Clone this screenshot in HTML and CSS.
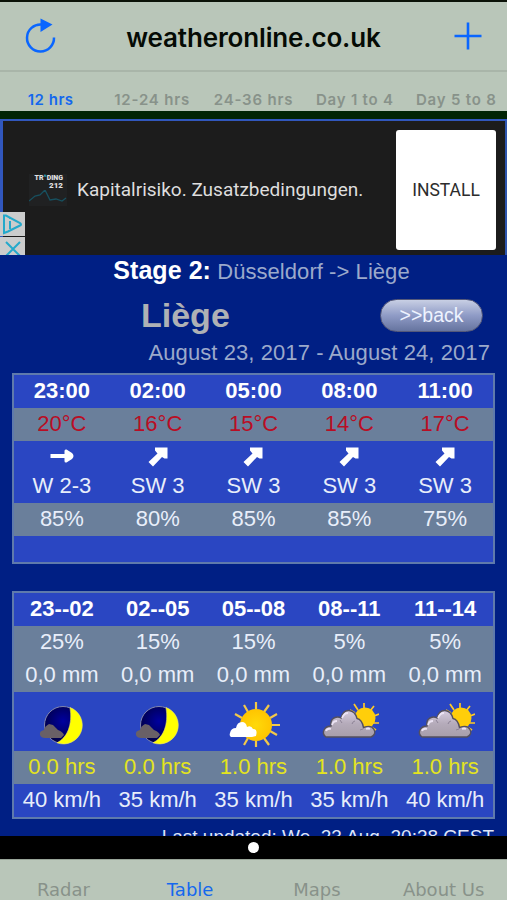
FILE: index.html
```html
<!DOCTYPE html>
<html lang="en">
<head>
    <meta charset="UTF-8">
    <meta name="viewport" content="width=device-width, initial-scale=1.0">
    <title>weatheronline.co.uk</title>
    <link rel="stylesheet" href="styles.css">
</head>
<body>
    <svg class="sprite" aria-hidden="true">
        <defs>
            <radialGradient id="night" cx="50%" cy="40%" r="60%">
                <stop offset="0" stop-color="#0000a0"/>
                <stop offset="1" stop-color="#000040"/>
            </radialGradient>
            <linearGradient id="cloudFill" x1="0" y1="0" x2="0" y2="1">
                <stop offset="0" stop-color="#d6cce0"/>
                <stop offset="0.5" stop-color="#b5abba"/>
                <stop offset="1" stop-color="#a79eaa"/>
            </linearGradient>
            <radialGradient id="sunFill" cx="50%" cy="50%" r="50%">
                <stop offset="0" stop-color="#ffd90a"/>
                <stop offset="1" stop-color="#ffc400"/>
            </radialGradient>
        </defs>
        <symbol id="arrow-e" viewBox="0 0 24 22">
            <path d="M.5 9h14V6q0-2 2-1.500l5.500 3.500q3 3 0 6l-5.500 3.500q-2 .5-2-1.500v-3H.5z"/>
        </symbol>
        <symbol id="arrow-ne" viewBox="0 0 24 22">
            <path d="M2.500 17l9-8.500-2.500-3V2.500h12.500v11h-3l-2.500-1.500-9 9.500z"/>
        </symbol>
        <symbol id="moon" viewBox="0 0 60 48">
            <circle cx="31" cy="25" r="18.500" fill="url(#night)" stroke="#8286ae" stroke-width="1"/>
            <path d="M38 7.500a18.800 18.800 0 0 1-13 35.300C35 38 41 25 38 7.500z" fill="#ffff00" stroke="#e8e070" stroke-width=".6"/>
            <path d="M8 35q-1-4 4-5 1-4 5-6l4 1 5 5q5 2 6 5l-3 3H13q-4 0-5-3z" fill="#696066"/>
        </symbol>
        <symbol id="sunny" viewBox="0 0 60 48">
            <g stroke="#f2c84a" stroke-width="2.200">
                <path d="M33 10V2M41 12l5-7M47 18l7-4M49 25h8M47 31l7 4M41 38l5 7M33 40v7M25 38l-4 7M19 18l-7-4M25 12l-4-7"/>
            </g>
            <circle cx="33" cy="25" r="16" fill="url(#sunFill)"/>
            <path d="M7 33q1-5 6-5 1-6 6-6 4 0 5 5 4-2 6 2 5 0 3 7l-4 1H8q-2-1-1-4z" fill="#fff"/>
        </symbol>
        <symbol id="cloudy" viewBox="0 0 60 48">
            <g stroke="#ffc928" stroke-width="1.700">
                <path d="M45 9V3M51 11l4-5M55 16l5-2M54 23h6M52 27l5 3M39 10l-4-6M36 13l-5-3"/>
            </g>
            <circle cx="46" cy="18" r="10.500" fill="#ffce0a"/>
            <path d="M7 37q-4-3-2-7t7-4q-1-6 3-8t7 0q2-8 8-7.500t8 8q5 1 6.500 9 8-3 10.500 2t-3 7.500z" fill="url(#cloudFill)" stroke="#54505e" stroke-width="1.400"/>
            <path d="M13 25q1-4 5-4M23 18q2-5 6-5M7 31q1-3 5-2M47 29q2-1 4 0" fill="none" stroke="#ece4f5" stroke-width="1.800"/>
            <path d="M36 21q-2 0-3 3M21 20l2 3M44 29l-3 1" fill="none" stroke="#8d8396" stroke-width="1"/>
        </symbol>
    </svg>

    <header class="navbar">
        <svg class="refresh" width="31" height="36" viewBox="0 0 31 36">
            <path d="M29 19.500A13.500 13.500 0 1 1 16.500 6.500" fill="none" stroke="#0a66ff" stroke-width="2.500"/>
            <path d="M15.500 .5l12 6-12 7.500z" fill="#0a66ff"/>
        </svg>
        <h1>weatheronline.co.uk</h1>
        <svg class="plus" width="28" height="28" viewBox="0 0 28 28">
            <path d="M14 .5v27M.5 14h27" stroke="#0a66ff" stroke-width="2.600"/>
        </svg>
    </header>
    <nav class="tabs">
        <span class="active">12 hrs</span>
        <span>12-24 hrs</span>
        <span>24-36 hrs</span>
        <span>Day 1 to 4</span>
        <span>Day 5 to 8</span>
    </nav>

    <section class="ad">
        <div class="ad-logo">
            <span>TR<i>^</i>DING</span>
            <span class="num">212</span>
            <svg width="38" height="13" viewBox="0 0 38 13"><path d="M0 11l6-5 5-1 5-5 5 10 6-1 6 2 4-3" fill="none" stroke="#17505f" stroke-width="1.300"/></svg>
        </div>
        <p>Kapitalrisiko. Zusatzbedingungen.</p>
        <div class="install">INSTALL</div>
        <div class="ad-marks">
            <svg width="25" height="24" viewBox="0 0 25 24"><path d="M4 3.500v17.500l4-1.500 12-6q2-1 0-2.500L6 3.500zM10 9v8M10 5.500v1.500" fill="none" stroke="#24a9cb" stroke-width="2"/></svg>
            <svg width="25" height="18" viewBox="0 0 25 18"><path d="M6 5l14 14M20 5L6 19" fill="none" stroke="#24a9cb" stroke-width="2"/></svg>
        </div>
    </section>

    <main class="forecast">
        <div class="stage"><b>Stage 2:</b> <span>Düsseldorf -&gt; Liège</span></div>
        <div class="city">
            <h2>Liège</h2>
            <a class="back">&gt;&gt;back</a>
        </div>
        <div class="dates">August 23, 2017 - August 24, 2017</div>

        <div class="table hourly">
            <div class="row head"><span>23:00</span><span>02:00</span><span>05:00</span><span>08:00</span><span>11:00</span></div>
            <div class="row grey temp"><span>20°C</span><span>16°C</span><span>15°C</span><span>14°C</span><span>17°C</span></div>
            <div class="row wind">
                <span><svg><use href="#arrow-e"/></svg>W 2-3</span>
                <span><svg><use href="#arrow-ne"/></svg>SW 3</span>
                <span><svg><use href="#arrow-ne"/></svg>SW 3</span>
                <span><svg><use href="#arrow-ne"/></svg>SW 3</span>
                <span><svg><use href="#arrow-ne"/></svg>SW 3</span>
            </div>
            <div class="row grey"><span>85%</span><span>80%</span><span>85%</span><span>85%</span><span>75%</span></div>
            <div class="row empty"></div>
        </div>

        <div class="table">
            <div class="row head"><span>23--02</span><span>02--05</span><span>05--08</span><span>08--11</span><span>11--14</span></div>
            <div class="row grey"><span>25%</span><span>15%</span><span>15%</span><span>5%</span><span>5%</span></div>
            <div class="row grey"><span>0,0 mm</span><span>0,0 mm</span><span>0,0 mm</span><span>0,0 mm</span><span>0,0 mm</span></div>
            <div class="row sky">
                <svg><use href="#moon"/></svg>
                <svg><use href="#moon"/></svg>
                <svg><use href="#sunny"/></svg>
                <svg><use href="#cloudy"/></svg>
                <svg><use href="#cloudy"/></svg>
            </div>
            <div class="row grey sun"><span>0.0 hrs</span><span>0.0 hrs</span><span>1.0 hrs</span><span>1.0 hrs</span><span>1.0 hrs</span></div>
            <div class="row"><span>40 km/h</span><span>35 km/h</span><span>35 km/h</span><span>35 km/h</span><span>40 km/h</span></div>
        </div>
        <div class="updated">Last updated: We, 23 Aug, 20:38 CEST</div>
    </main>

    <div class="pager"><span></span></div>
    <footer class="tabbar">
        <span>Radar</span>
        <span class="active">Table</span>
        <span>Maps</span>
        <span>About Us</span>
    </footer>
</body>
</html>
```
FILE: styles.css
```css
* {
    box-sizing: border-box;
}

body {
    font-family: 'Liberation Sans', Arial, sans-serif;
    margin: 0;
    width: 507px;
    height: 900px;
    overflow: hidden;
    background-color: #001f84;
    color: #e8eefa;
    display: flex;
    flex-direction: column;
}

h1, h2, p {
    margin: 0;
}

.sprite {
    position: absolute;
    width: 0;
    height: 0;
}

/* top bar */
.navbar {
    height: 72px;
    flex: none;
    background-color: #b9c6b9;
    border-top: 2px solid #0b1208;
    border-bottom: 2px solid #a9b5a9;
    display: flex;
    align-items: center;
    justify-content: space-between;
    padding: 0 25px;
}

.navbar h1 {
    font-family: Inter, sans-serif;
    font-size: 26px;
    font-weight: 600;
    letter-spacing: -0.15px;
    color: #050b05;
    padding-top: 2px;
    margin-right: 3px;
}

.tabs {
    height: 39px;
    flex: none;
    background-color: #b9c6b9;
    display: grid;
    grid-template-columns: repeat(5, 1fr);
    text-align: center;
    font-family: Inter, sans-serif;
    font-size: 15px;
    font-weight: 600;
    line-height: 18px;
    letter-spacing: 0.8px;
    padding-top: 19px;
    color: #88928a;
    white-space: nowrap;
}

.tabs .active, .tabbar .active {
    color: #1468ee;
}

.tabs .active {
    letter-spacing: 0.5px;
}

/* banner */
.ad {
    position: relative;
    height: 144px;
    flex: none;
    background-color: #1c1c1c;
    border-top: 8px solid #022405;
    display: flex;
    align-items: center;
    padding-left: 29px;
    padding-top: 5px;
    font-family: Roboto, sans-serif;
    box-shadow: inset 3px 2px 0 #3157bd, inset -2px 0 0 #2d55ae;
}

.ad-logo {
    width: 38px;
    height: 32px;
    margin-right: 10px;
    font-size: 7px;
    font-weight: 900;
    line-height: 8px;
    display: flex;
    flex-direction: column;
    align-items: flex-end;
    background-color: #202122;
    color: #e0e0e0;
}

.ad-logo span {
    padding-right: 4px;
}

.ad-logo .num {
    font-size: 8px;
}

.ad-logo i {
    color: #28a5bd;
    font-style: normal;
}

.ad p {
    width: 319px;
    font-size: 19px;
    white-space: nowrap;
    color: #dedede;
}

.install {
    width: 100px;
    height: 120px;
    border-radius: 3px;
    background-color: #fff;
    color: #2c2c2c;
    font-size: 17.5px;
    line-height: 120px;
    text-align: center;
}

.ad-marks {
    position: absolute;
    left: 0;
    bottom: 0;
    display: flex;
    flex-direction: column;
    gap: 1px;
}

.ad-marks svg {
    display: block;
    background-color: #cbcccc;
}

/* forecast */
.forecast {
    height: 581px;
    flex: none;
    overflow: hidden;
    padding: 0 12px 0 12px;
}

.stage {
    height: 37px;
    line-height: 31px;
    text-align: center;
    font-size: 22px;
    letter-spacing: 0.06px;
    color: #9ba9cb;
    padding-left: 16px;
    white-space: nowrap;
}

.stage b {
    font-size: 25px;
    color: #fff;
}

.city {
    height: 46px;
    display: flex;
    align-items: center;
    justify-content: space-between;
    padding: 0 12px 0 129px;
}

.city h2 {
    font-size: 34px;
    color: #aeb1b5;
}

.back {
    width: 103px;
    height: 33px;
    border: 1.5px solid #55597a;
    border-radius: 17px;
    background: linear-gradient(#c8cfe4, #8f9bc6 50%, #66749f);
    font-size: 19.5px;
    line-height: 31px;
    text-align: center;
    color: #eef3ff;
}

.dates {
    height: 35px;
    line-height: 29px;
    text-align: right;
    padding-right: 5px;
    font-size: 22px;
    letter-spacing: 0.08px;
    color: #9ba9cb;
    white-space: nowrap;
}

.table {
    border: 2px solid #5f7aac;
    background-color: #2a46c2;
    font-size: 22px;
}

.hourly {
    margin-bottom: 27px;
}

.row {
    display: grid;
    grid-template-columns: repeat(5, 1fr);
    height: 33px;
    line-height: 32px;
    text-align: center;
    white-space: nowrap;
}

.head {
    font-weight: bold;
    color: #fff;
}

.grey {
    background-color: #6a7f9b;
}

.temp {
    color: #b90d24;
}

.sun {
    color: #e4e41e;
}

.wind {
    height: 62px;
}

.wind span {
    display: flex;
    flex-direction: column;
    align-items: center;
    line-height: 32px;
}

.wind svg {
    width: 24px;
    height: 22px;
    margin-top: 4px;
    margin-bottom: 3px;
    fill: #fff;
}

.empty {
    height: 26px;
}

.sky {
    height: 59px;
    align-items: center;
    justify-items: center;
}

.sky svg {
    width: 60px;
    height: 48px;
    margin-top: 5px;
}

.updated {
    text-align: right;
    padding-right: 1px;
    font-size: 19px;
    line-height: 36px;
    color: #dfe6f8;
    white-space: nowrap;
}

/* bottom */
.pager {
    height: 23px;
    flex: none;
    background-color: #000;
    display: flex;
    align-items: center;
    justify-content: center;
}

.pager span {
    width: 11px;
    height: 11px;
    border-radius: 50%;
    background-color: #fff;
}

.tabbar {
    flex: 1;
    background-color: #b9c6b9;
    border-top: 1px solid #99a599;
    border-bottom: 1px solid #343d34;
    display: grid;
    grid-template-columns: repeat(4, 1fr);
    text-align: center;
    font-family: 'DejaVu Sans', Verdana, sans-serif;
    font-size: 18px;
    line-height: 22px;
    padding-top: 19px;
    color: #88928a;
    white-space: nowrap;
}
```
